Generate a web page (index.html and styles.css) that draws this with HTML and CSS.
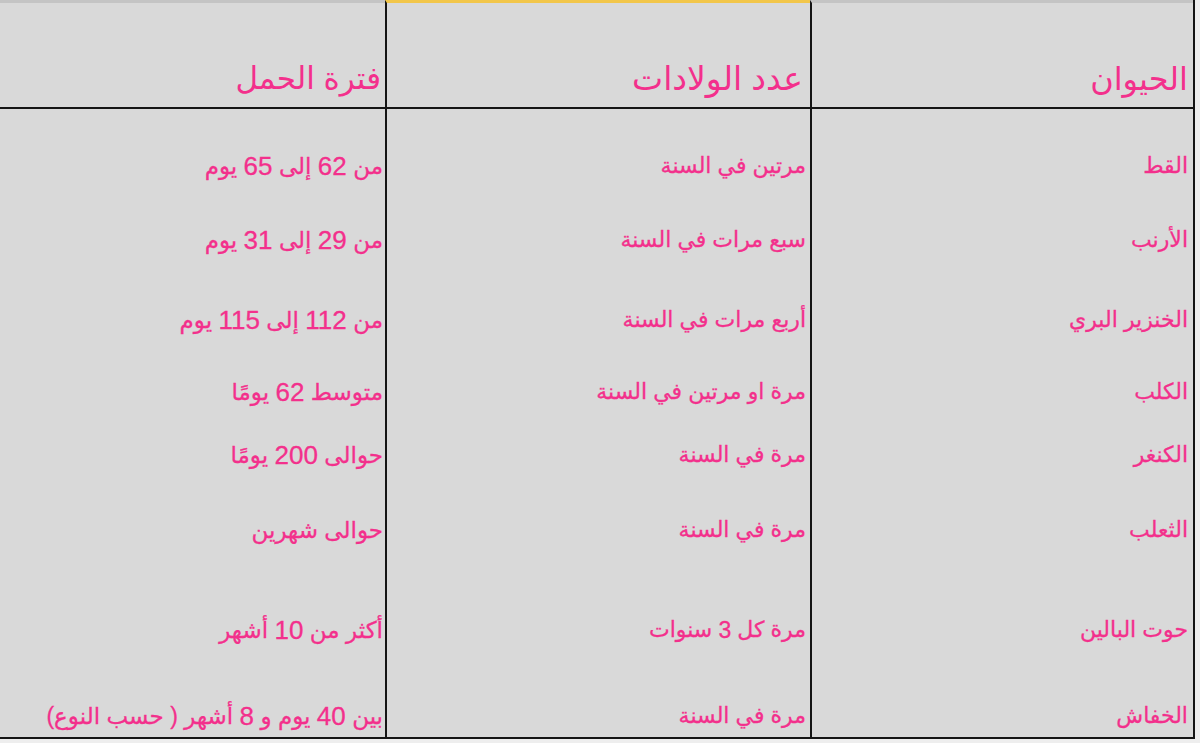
FILE: index.html
```html
<!DOCTYPE html>
<html lang="ar">
<head>
<meta charset="utf-8">
<title>جدول الحيوانات</title>
<link rel="stylesheet" href="styles.css">
</head>
<body>
<div class="sheet" dir="rtl">
  <div class="row head">
    <div class="cell c1">الحيوان</div>
    <div class="cell c2 top-sel">عدد الولادات</div>
    <div class="cell c3">فترة الحمل</div>
  </div>
  <div class="row r1">
    <div class="cell c1">القط</div>
    <div class="cell c2">مرتين في السنة</div>
    <div class="cell c3">من <span class="num">62</span> إلى <span class="num">65</span> يوم</div>
  </div>
  <div class="row r2">
    <div class="cell c1">الأرنب</div>
    <div class="cell c2">سبع مرات في السنة</div>
    <div class="cell c3">من <span class="num">29</span> إلى <span class="num">31</span> يوم</div>
  </div>
  <div class="row r3">
    <div class="cell c1">الخنزير البري</div>
    <div class="cell c2">أربع مرات في السنة</div>
    <div class="cell c3">من <span class="num">112</span> إلى <span class="num">115</span> يوم</div>
  </div>
  <div class="row r4">
    <div class="cell c1">الكلب</div>
    <div class="cell c2">مرة او مرتين في السنة</div>
    <div class="cell c3">متوسط <span class="num">62</span> يومًا</div>
  </div>
  <div class="row r5">
    <div class="cell c1">الكنغر</div>
    <div class="cell c2">مرة في السنة</div>
    <div class="cell c3">حوالى <span class="num">200</span> يومًا</div>
  </div>
  <div class="row r6">
    <div class="cell c1">الثعلب</div>
    <div class="cell c2">مرة في السنة</div>
    <div class="cell c3">حوالى شهرين</div>
  </div>
  <div class="row r7">
    <div class="cell c1">حوت البالين</div>
    <div class="cell c2">مرة كل <span class="num">3</span> سنوات</div>
    <div class="cell c3">أكثر من <span class="num">10</span> أشهر</div>
  </div>
  <div class="row r8">
    <div class="cell c1">الخفاش</div>
    <div class="cell c2">مرة في السنة</div>
    <div class="cell c3">بين <span class="num">40</span> يوم و <span class="num">8</span> أشهر ( حسب النوع)</div>
  </div>
</div>
</body>
</html>
```
FILE: styles.css
```css
html, body {
  margin: 0;
  padding: 0;
}
body {
  background: #eeeeee;
  width: 1200px;
  height: 743px;
  overflow: hidden;
  font-family: "Liberation Sans", "DejaVu Sans", sans-serif;
  color: #f3308c;
}
.sheet {
  width: 1193px;
  background: #d9d9d9;
  border-right: 2px solid #151515;
  border-bottom: 2px solid #151515;
}
.row {
  display: grid;
  grid-template-columns: 383px 425px 385px;
}
.cell {
  display: flex;
  align-items: flex-end;
  justify-content: flex-start;
  padding: 0 5px 6px 0;
  font-size: 22px;
  line-height: 30px;
  white-space: pre;
  overflow: hidden;
  -webkit-text-stroke: 0.3px #f3308c;
}
.c1, .c2 {
  border-left: 2px solid #151515;
}
.c2 {
  padding-right: 4px;
}
.c3 {
  padding-right: 2px;
  font-size: 23px;
}
.num {
  font-size: 26px;
}
.c2 .num {
  font-size: 23px;
}
.head {
  height: 109px;
  border-bottom: 2px solid #151515;
  box-sizing: border-box;
}
.head .cell {
  border-top: 3px solid #c4c4c4;
  font-size: 32px;
  line-height: 40px;
  padding-bottom: 8px;
  -webkit-text-stroke: 0;
}
.head .c2 {
  font-size: 33px;
  padding-right: 7px;
}
.head .c3 {
  font-size: 31px;
  padding-right: 4px;
}
.head .top-sel {
  border-top-color: #f2c64a;
}
.r1 { height: 78px; }
.r2 { height: 74px; }
.r3 { height: 80px; }
.r4 { height: 72px; }
.r5 { height: 63px; }
.r6 { height: 75px; }
.r7 { height: 100px; }
.r8 { height: 86px; }
```
